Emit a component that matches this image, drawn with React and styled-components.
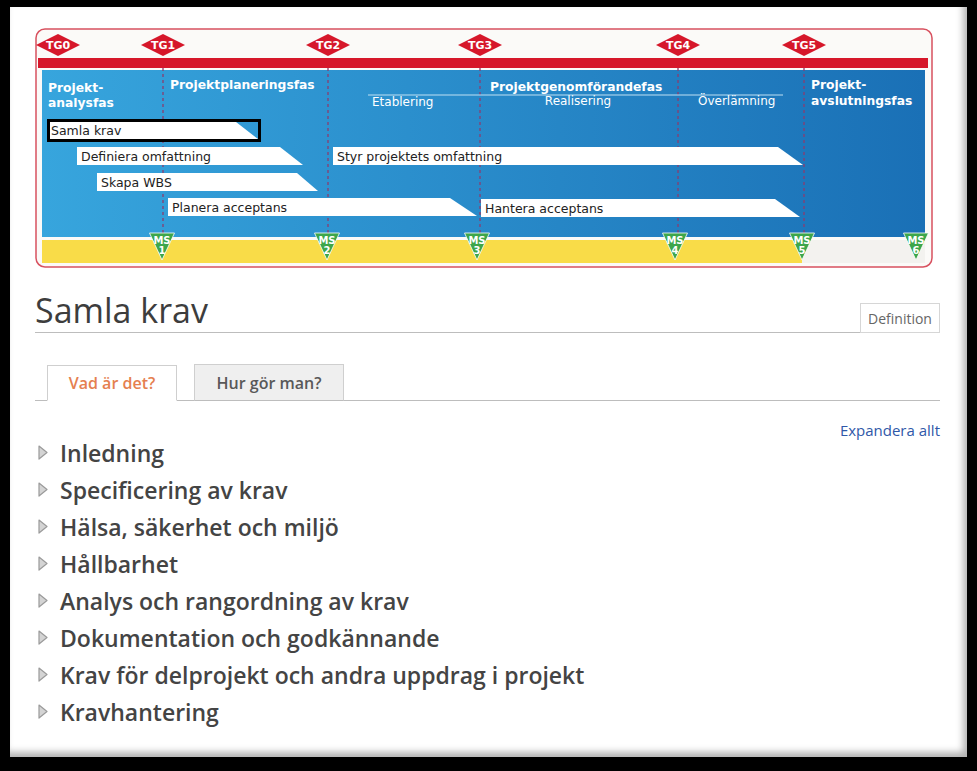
import React from 'react'
import styled, { createGlobalStyle } from 'styled-components'

const GlobalStyle = createGlobalStyle`
    html, body {
        margin: 0;
        padding: 0;
        background-color: #000;
    }
    * {
        box-sizing: border-box;
    }
`

const gates = [
    { label: 'TG0', x: 58 },
    { label: 'TG1', x: 163 },
    { label: 'TG2', x: 328 },
    { label: 'TG3', x: 480 },
    { label: 'TG4', x: 678 },
    { label: 'TG5', x: 804 },
]

const milestones = [
    { n: 1, x: 162 },
    { n: 2, x: 327 },
    { n: 3, x: 477 },
    { n: 4, x: 675 },
    { n: 5, x: 802 },
    { n: 6, x: 916 },
]

// x = left, tr = top right corner, br = bottom right corner
const bars = [
    { label: 'Definiera omfattning', x: 77, tr: 280, br: 303, y: 147, h: 18 },
    { label: 'Styr projektets omfattning', x: 333, tr: 778, br: 803, y: 147, h: 18 },
    { label: 'Skapa WBS', x: 97, tr: 297, br: 318, y: 173, h: 18 },
    { label: 'Planera acceptans', x: 168, tr: 450, br: 477, y: 198, h: 18 },
    { label: 'Hantera acceptans', x: 481, tr: 775, br: 800, y: 199, h: 18 },
]

const sections = [
    'Inledning',
    'Specificering av krav',
    'Hälsa, säkerhet och miljö',
    'Hållbarhet',
    'Analys och rangordning av krav',
    'Dokumentation och godkännande',
    'Krav för delprojekt och andra uppdrag i projekt',
    'Kravhantering',
]

function Diagram() {
    return (
        <DiagramSvg width="898" height="240" viewBox="35 28 898 240">
            <defs>
                <linearGradient id="phaseBlue" gradientUnits="userSpaceOnUse" x1="42" y1="0" x2="925" y2="0">
                    <stop offset="0" stopColor="#37a5dd" />
                    <stop offset="1" stopColor="#1a70b6" />
                </linearGradient>
            </defs>
            <rect x="36" y="29" width="896" height="238" rx="9" fill="#fbfaf8" stroke="#d8515f" strokeWidth="1.5" />
            <rect x="38" y="58" width="890" height="10" fill="#d6172a" />
            <rect x="42" y="70" width="883" height="167" fill="url(#phaseBlue)" />
            <rect x="42" y="240" width="760" height="23" fill="#f9dc48" />
            <rect x="802" y="240" width="123" height="23" fill="#f3f2ef" />

            {gates.slice(1).map(g => (
                <line key={g.label} x1={g.x} y1="68" x2={g.x} y2="238" stroke="#8a3d70" strokeWidth="1.3" strokeDasharray="3 3" />
            ))}

            {gates.map(g => (
                <g key={g.label}>
                    <polygon points={`${g.x - 22},45 ${g.x},34 ${g.x + 22},45 ${g.x},56`} fill="#d6172a" />
                    <text x={g.x} y="49" textAnchor="middle" fontFamily="DejaVu Sans, sans-serif" fontWeight="bold" fontSize="11" fill="#fff">{g.label}</text>
                </g>
            ))}

            <g fontFamily="DejaVu Sans, sans-serif" fill="#fff">
                <text x="48" y="92" fontWeight="bold" fontSize="12.3">Projekt-</text>
                <text x="48" y="107" fontWeight="bold" fontSize="12.3">analysfas</text>
                <text x="170" y="89" fontWeight="bold" fontSize="12.3">Projektplaneringsfas</text>
                <text x="490" y="91" fontWeight="bold" fontSize="12.3">Projektgenomförandefas</text>
                <line x1="368" y1="95" x2="783" y2="95" stroke="#bfe0f3" strokeWidth="1" />
                <text x="372" y="106" fontSize="12">Etablering</text>
                <text x="578" y="105" fontSize="12" textAnchor="middle">Realisering</text>
                <text x="698" y="105" fontSize="12">Överlämning</text>
                <text x="811" y="89" fontWeight="bold" fontSize="12.3">Projekt-</text>
                <text x="811" y="105" fontWeight="bold" fontSize="12.3">avslutningsfas</text>
            </g>

            <rect x="48.5" y="120.5" width="211" height="20" fill="#fff" stroke="#000" strokeWidth="3" />
            <polygon points="236,122 258,122 258,139" fill="url(#phaseBlue)" />
            <text x="51" y="135" fontFamily="DejaVu Sans, sans-serif" fontSize="12.5" fill="#222">Samla krav</text>

            {bars.map(b => (
                <g key={b.label}>
                    <polygon points={`${b.x},${b.y} ${b.tr},${b.y} ${b.br},${b.y + b.h} ${b.x},${b.y + b.h}`} fill="#fff" />
                    <text x={b.x + 4} y={b.y + 14} fontFamily="DejaVu Sans, sans-serif" fontSize="12.5" fill="#222">{b.label}</text>
                </g>
            ))}

            {milestones.map(m => (
                <g key={m.n}>
                    <polygon points={`${m.x - 12.5},233 ${m.x + 12.5},233 ${m.x},260`} fill="#3da64b" stroke="#fff" strokeWidth="0.8" strokeLinejoin="round" />
                    <text x={m.x} y="243.5" textAnchor="middle" fontFamily="DejaVu Sans, sans-serif" fontWeight="bold" fontSize="10" fill="#fff">MS</text>
                    <text x={m.x} y="253.5" textAnchor="middle" fontFamily="DejaVu Sans, sans-serif" fontWeight="bold" fontSize="10" fill="#fff">{m.n}</text>
                </g>
            ))}
        </DiagramSvg>
    )
}

function Caret() {
    return (
        <CaretSvg width="10" height="15" viewBox="0 0 10 15">
            <path d="M1 1 L9 7.5 L1 14 Z" fill="#d4d4d4" stroke="#9a9a9a" strokeWidth="1.2" strokeLinejoin="round" />
        </CaretSvg>
    )
}

function App() {
    return (
        <>
            <GlobalStyle />
            <Page>
                <Diagram />
                <TitleRow>
                    <Title>Samla krav</Title>
                    <DefinitionButton>Definition</DefinitionButton>
                </TitleRow>
                <TabBar>
                    <Tab active>Vad är det?</Tab>
                    <Tab>Hur gör man?</Tab>
                </TabBar>
                <ExpandRow>
                    <ExpandLink>Expandera allt</ExpandLink>
                </ExpandRow>
                <SectionList>
                    {sections.map(s => (
                        <SectionRow key={s}>
                            <Caret />
                            <SectionTitle>{s}</SectionTitle>
                        </SectionRow>
                    ))}
                </SectionList>
            </Page>
        </>
    )
}

const Page = styled.div`
    width: 957px;
    height: 750px;
    margin: 7px 0 0 10px;
    padding: 21px 27px 0 25px;
    background-color: #fff;
    box-shadow: inset -4px -5px 7px rgba(0, 0, 0, 0.3);
    font-family: "Open Sans", "Liberation Sans", sans-serif;
`
const DiagramSvg = styled.svg`
    display: block;
`
const TitleRow = styled.div`
    display: flex;
    align-items: flex-end;
    justify-content: space-between;
    margin-top: 22px;
    border-bottom: 1px solid #bdbdbd;
    height: 43px;
`
const Title = styled.h1`
    margin: 0;
    padding-bottom: 1px;
    font-size: 34px;
    line-height: 42px;
    font-weight: 400;
    color: #3d3d3d;
`
const DefinitionButton = styled.div`
    height: 30px;
    width: 80px;
    margin-bottom: -1px;
    border: 1px solid #d6d6d6;
    display: flex;
    align-items: center;
    justify-content: center;
    font-size: 14px;
    color: #666;
    background-color: #fff;
`
const TabBar = styled.div`
    display: flex;
    align-items: flex-end;
    gap: 17px;
    margin-top: 30px;
    padding-left: 12px;
    height: 38px;
    border-bottom: 1px solid #bdbdbd;
`
const Tab = styled.div`
    display: flex;
    align-items: center;
    justify-content: center;
    width: ${p => (p.active ? '130px' : '150px')};
    height: ${p => (p.active ? '36px' : '37px')};
    margin-bottom: -1px;
    border: 1px solid #cfcfcf;
    border-bottom: ${p => (p.active ? '1px solid #fff' : '1px solid #bdbdbd')};
    background-color: ${p => (p.active ? '#fff' : '#efefef')};
    color: ${p => (p.active ? '#e5804f' : '#595959')};
    font-size: 16px;
    font-weight: 600;
`
const ExpandRow = styled.div`
    display: flex;
    justify-content: flex-end;
    margin-top: 19px;
    height: 20px;
`
const ExpandLink = styled.a`
    font-size: 15px;
    line-height: 20px;
    color: #2f58a8;
    text-decoration: none;
    cursor: pointer;
`
const SectionList = styled.div`
    margin-top: -6px;
    padding-left: 3px;
`
const SectionRow = styled.div`
    display: flex;
    align-items: center;
    gap: 12px;
    height: 37px;
`
const CaretSvg = styled.svg`
    display: block;
    flex-shrink: 0;
`
const SectionTitle = styled.span`
    font-size: 23px;
    font-weight: 600;
    color: #444;
`

export default App
